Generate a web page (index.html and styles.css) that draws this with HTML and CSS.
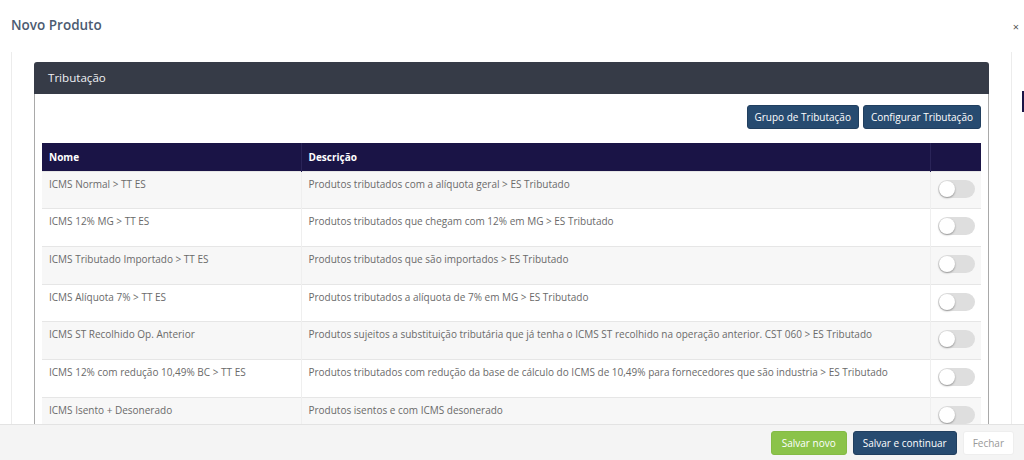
FILE: index.html
```html
<!doctype html>
<html lang="pt-BR">
<head>
<meta charset="UTF-8">
<title>Novo Produto</title>
<link rel="stylesheet" href="styles.css">
</head>
<body>
<div class="modal">
	<div class="modal-header">
		<h4>Novo Produto</h4>
		<span class="close">&times;</span>
	</div>
	<div class="modal-body">
		<div class="panel">
			<div class="panel-heading">Tributação</div>
			<div class="panel-body">
				<div class="actions">
					<button class="btn btn-primary">Grupo de Tributação</button>
					<button class="btn btn-primary">Configurar Tributação</button>
				</div>
				<table>
					<thead>
						<tr>
							<th class="col-nome">Nome</th>
							<th>Descrição</th>
							<th class="col-switch"></th>
						</tr>
					</thead>
					<tbody>
						<tr>
							<td>ICMS Normal &gt; TT ES</td>
							<td>Produtos tributados com a alíquota geral &gt; ES Tributado</td>
							<td class="col-switch"><span class="switch"></span></td>
						</tr>
						<tr>
							<td>ICMS 12% MG &gt; TT ES</td>
							<td>Produtos tributados que chegam com 12% em MG &gt; ES Tributado</td>
							<td class="col-switch"><span class="switch"></span></td>
						</tr>
						<tr>
							<td>ICMS Tributado Importado &gt; TT ES</td>
							<td>Produtos tributados que são importados &gt; ES Tributado</td>
							<td class="col-switch"><span class="switch"></span></td>
						</tr>
						<tr>
							<td>ICMS Alíquota 7% &gt; TT ES</td>
							<td>Produtos tributados a alíquota de 7% em MG &gt; ES Tributado</td>
							<td class="col-switch"><span class="switch"></span></td>
						</tr>
						<tr>
							<td>ICMS ST Recolhido Op. Anterior</td>
							<td>Produtos sujeitos a substituição tributária que já tenha o ICMS ST recolhido na operação anterior. CST 060 &gt; ES Tributado</td>
							<td class="col-switch"><span class="switch"></span></td>
						</tr>
						<tr>
							<td>ICMS 12% com redução 10,49% BC &gt; TT ES</td>
							<td>Produtos tributados com redução da base de cálculo do ICMS de 10,49% para fornecedores que são industria &gt; ES Tributado</td>
							<td class="col-switch"><span class="switch"></span></td>
						</tr>
						<tr>
							<td>ICMS Isento + Desonerado</td>
							<td>Produtos isentos e com ICMS desonerado</td>
							<td class="col-switch"><span class="switch"></span></td>
						</tr>
					</tbody>
				</table>
			</div>
		</div>
	</div>
	<div class="modal-footer">
		<button class="btn btn-success">Salvar novo</button>
		<button class="btn btn-primary">Salvar e continuar</button>
		<button class="btn btn-default">Fechar</button>
	</div>
	<div class="edge-mark"></div>
</div>
</body>
</html>
```
FILE: styles.css
```css
*{box-sizing:border-box;}
html,body{margin:0;padding:0;background:#fff;}
body{font-family:"Open Sans","Liberation Sans",sans-serif;font-size:10px;color:#666;}
.modal{position:relative;height:460px;display:flex;flex-direction:column;overflow:hidden;}
.modal-header{height:52px;display:flex;align-items:flex-start;justify-content:space-between;padding:15px 5px 0 11px;flex-shrink:0;}
.modal-header h4{margin:0;font-size:13.5px;font-weight:600;color:#4c5b71;line-height:20px;}
.close{font-size:11px;color:#555;line-height:20px;margin-top:2px;}
.modal-body{flex:1;overflow:hidden;margin:0 12px 0 11px;border-left:1px solid #ececec;border-right:1px solid #ececec;padding:10px 22px 0 22px;}
.panel{background:#fff;}
.panel-heading{background:#363b47;color:#eef0f3;font-size:11.6px;height:32px;line-height:32px;padding:0 14px;border-radius:3px 3px 0 0;}
.panel-body{border-left:1px solid #a9a9a9;border-right:1px solid #a9a9a9;padding:11px 7px 0 7px;}
.actions{display:flex;justify-content:flex-end;gap:4px;margin-bottom:14px;}
.actions .btn{padding:0 7px;}
.btn{font-family:inherit;font-size:10px;height:24px;padding:0 9px;border:1px solid transparent;border-radius:3px;cursor:pointer;}
.btn-primary{background:#274b70;border-color:#213f5f;color:#fff;}
.btn-success{background:#8bc34a;border-color:#84bb45;color:#fff;padding:0 10px;}
.btn-default{background:#fff;border-color:#eee;color:#999;}
table{width:100%;border-collapse:collapse;table-layout:fixed;}
thead th{background:#1a1446;color:#fff;font-weight:700;text-align:left;height:28px;padding:0 7px;border-right:1px solid #2a2458;}
thead th:last-child{border-right:0;}
.col-nome{width:259px;}
.col-switch{width:51px;}
tbody td{height:37.7px;padding:5px 7px 0 7px;vertical-align:top;border-top:1px solid #e6e6e6;border-right:1px solid #efefef;line-height:14px;color:#6a6a6a;}
tbody td:last-child{border-right:0;}
tbody tr:nth-child(odd) td{background:#f7f7f7;}
tbody td.col-switch{padding:8px 0 0 7px;}
.switch{display:block;width:37px;height:18px;background:#dedede;border-radius:9px;position:relative;}
.switch::before{content:"";position:absolute;left:1px;top:1px;width:16px;height:16px;border-radius:50%;background:#fff;box-shadow:0 1px 2px rgba(0,0,0,.35);}
.modal-footer{height:36px;flex-shrink:0;background:#f4f4f4;border-top:1px solid #e3e3e3;display:flex;justify-content:flex-end;align-items:center;gap:6px;padding:0 10px 0 0;}
.edge-mark{position:absolute;right:0;top:91px;width:2px;height:21px;background:#1a1446;}
```
